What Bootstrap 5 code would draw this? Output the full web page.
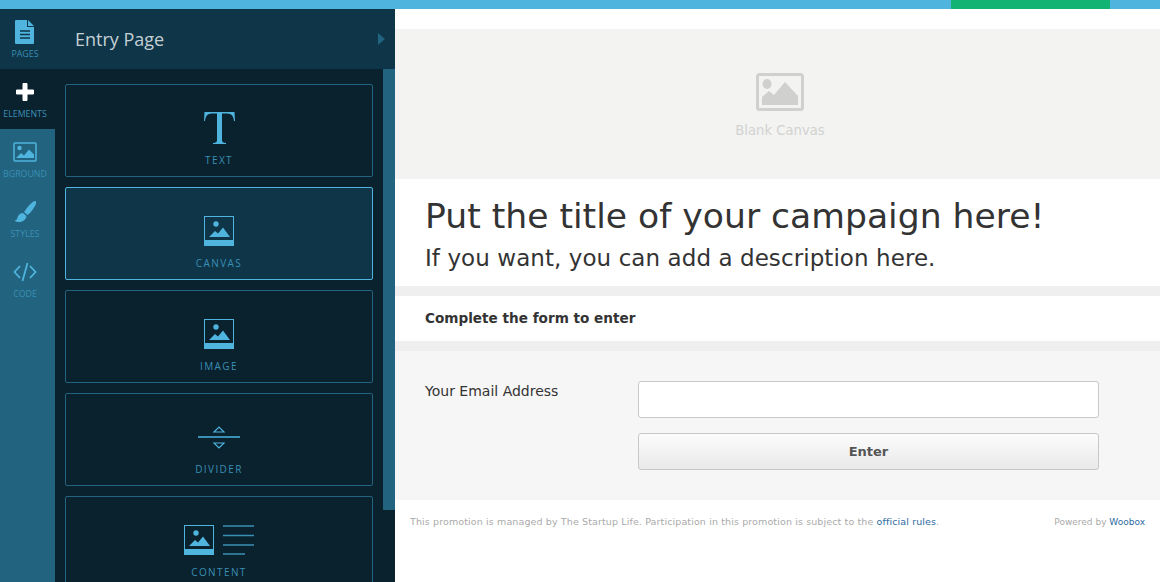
<!DOCTYPE html>
<html lang="en">
<head>
  <meta charset="utf-8">
  <title>Entry Page</title>
  <link href="https://cdn.jsdelivr.net/npm/bootstrap@5.3.3/dist/css/bootstrap.min.css" rel="stylesheet">
  <style>
    html, body { height: 100%; overflow: hidden; }
    body { font-family: "DejaVu Sans", sans-serif; color: #333; background: #fff; }
    .top-strip { height: 9px; background: #4fb4de; }
    .top-strip-green { width: 159px; margin-right: 50px; background: #13b374; }
    .main-area { height: 573px; }
    .side-panel { width: 395px; background: #0a212e; font-family: "Open Sans", sans-serif; }
    .side-head { height: 60px; background: #0e3548; }
    .side-tab { width: 55px; height: 60px; padding: 10px 5px 0 0; font-size: 8.8px; color: #3a8fb4; }
    .side-tab svg { display: block; height: 26px; margin-bottom: 3px; }
    .side-tab-active { background: #0a212e; }
    .side-rail { width: 55px; background: #22637f; }
    .side-title { font-size: 18px; color: #c5d0d5; padding-left: 20px; }
    .side-arrow { width: 0; height: 0; margin-right: 10px; border-left: 7px solid #22637f; border-top: 6px solid transparent; border-bottom: 6px solid transparent; }
    .side-body { height: 513px; overflow: hidden; }
    .tile-list { width: 328px; padding: 15px 10px 0; }
    .elem-tile { flex: 0 0 93px; margin-bottom: 10px; border: 1px solid #22637f; border-radius: 2px; font-size: 10px; letter-spacing: 1.4px; color: #3a8fb4; }
    .elem-tile-on { background: #0e3548; border-color: #4fb4de; }
    .tile-icon { height: 40px; margin-top: 23px; margin-bottom: 5px; }
    .tile-scroll { width: 12px; height: 441px; background: #22637f; }
    .page-view { min-width: 0; }
    .canvas-box { height: 150px; margin-top: 20px; padding: 44px 0 0 5px; background: #f3f3f2; font-size: 13.2px; color: #d2d2d0; }
    .canvas-text { margin-top: 10px; }
    .title-box { height: 107px; padding: 16px 30px 0; }
    .title-box h1 { font-size: 34.6px; font-weight: 400; line-height: 42px; margin: 0; color: #333; }
    .title-box p { font-size: 23px; line-height: 30px; margin: 6px 0 0; letter-spacing: .07px; color: #333; }
    .sub-head { height: 45px; padding-left: 30px; margin: 10px 0; font-size: 13.6px; font-weight: 700; box-shadow: 0 -10px 0 #efefef, 0 10px 0 #efefef; }
    .form-box { height: 149px; padding: 30px 61px 30px 30px; background: #f6f6f6; font-size: 14px; }
    .form-label-cell { width: 213px; }
    .form-box .form-control { height: 37px; border: 1px solid #c8c8c8; border-radius: 3px; box-shadow: none; }
    .enter-btn { display: block; width: 100%; height: 37px; margin-top: 15px; padding: 1px 0 0; font-size: 13px; font-weight: 700; color: #555; border: 1px solid #c8c8c8; border-radius: 3px; background: linear-gradient(#fcfcfc, #e9e9e9); }
    .foot-line { padding: 15px 15px 0; font-size: 9.5px; letter-spacing: .12px; color: #aaa; }
    .foot-power { font-size: 9px; letter-spacing: 0; }
    .foot-line a { color: #2d6a9f; text-decoration: none; }
  </style>
</head>
<body>
  <div class="top-strip d-flex justify-content-end">
    <div class="top-strip-green"></div>
  </div>

  <div class="main-area d-flex">
    <!-- left editor panel -->
    <div class="side-panel flex-shrink-0 d-flex flex-column">
      <div class="side-head d-flex align-items-center">
        <div class="side-tab text-center flex-shrink-0">
          <svg class="mx-auto" width="20" height="24" viewBox="0 0 20 24"><path fill="#4fb4de" d="M1 0h11v7h7v16a1 1 0 0 1-1 1H1a1 1 0 0 1-1-1V1a1 1 0 0 1 1-1z"/><path fill="#4fb4de" d="M13 0l6 6h-6z"/><path stroke="#0e3548" stroke-width="1.6" d="M5 11h10M5 14.500h10M5 18h10"/></svg>
          PAGES
        </div>
        <div class="side-title flex-grow-1">Entry Page</div>
        <div class="side-arrow"></div>
      </div>

      <div class="side-body d-flex">
        <div class="side-rail flex-shrink-0">
          <div class="side-tab side-tab-active text-center">
            <svg class="mx-auto" width="18" height="18" viewBox="0 0 18 18"><path fill="#fff" stroke="#fff" stroke-linejoin="round" d="M7 .5h4v6.500h6.500v4H11v6.500H7V11H.5V7H7z"/></svg>
            ELEMENTS
          </div>
          <div class="side-tab text-center">
            <svg class="mx-auto" width="24" height="20" viewBox="0 0 24 20"><rect x="1" y="1" width="22" height="18" rx="1" fill="none" stroke="#4fb4de" stroke-width="1.500"/><circle cx="6.500" cy="6" r="2.200" fill="#4fb4de"/><path fill="#4fb4de" d="M3 16l5-5 3 2.500 5-6 5 5v3.500z"/></svg>
            BGROUND
          </div>
          <div class="side-tab text-center">
            <svg class="mx-auto" width="24" height="24" viewBox="0 0 24 24"><path fill="#4fb4de" d="M22 1c1.500 0 1.500 2 .5 4-2 4-5 8-8 10l-3.500-3C14 8 19 1 22 1zM10 13l3.500 3c-.5 3.500-3.500 6-7 6-2 0-4-.5-5-1.500 2 0 2.500-1 3-3 .5-2.500 3-4.500 5.500-4.500z"/></svg>
            STYLES
          </div>
          <div class="side-tab text-center">
            <svg class="mx-auto" width="24" height="24" viewBox="0 0 24 24"><path fill="none" stroke="#4fb4de" stroke-width="1.800" d="M7 6l-5.500 6L7 18M17 6l5.500 6L17 18M14.500 3l-5 18"/></svg>
            CODE
          </div>
        </div>

        <div class="tile-list d-flex flex-column flex-shrink-0">
          <div class="elem-tile d-flex flex-column align-items-center">
            <div class="tile-icon d-flex align-items-center">
              <svg width="31" height="32" viewBox="0 0 31 32"><path fill="#4fb4de" d="M.5 0h30l.5 9h-1c-.5-4.500-2-7.500-7-7.500h-5V28c0 2 1 2.800 4 3v1H9v-1c3-.2 4-1 4-3V1.500H8c-5 0-6.500 3-7 7.500H0z"/></svg>
            </div>
            <span>TEXT</span>
          </div>
          <div class="elem-tile elem-tile-on d-flex flex-column align-items-center">
            <div class="tile-icon d-flex align-items-center">
              <svg width="30" height="30" viewBox="0 0 30 30"><rect x=".5" y=".5" width="29" height="29" fill="none" stroke="#4fb4de"/><rect y="24" width="30" height="6" fill="#4fb4de"/><circle cx="12" cy="8" r="2.700" fill="#4fb4de"/><path fill="#4fb4de" d="M5 21l6-6 3 2.500 5-6 7 9.500z"/></svg>
            </div>
            <span>CANVAS</span>
          </div>
          <div class="elem-tile d-flex flex-column align-items-center">
            <div class="tile-icon d-flex align-items-center">
              <svg width="30" height="30" viewBox="0 0 30 30"><rect x=".5" y=".5" width="29" height="29" fill="none" stroke="#4fb4de"/><rect y="24" width="30" height="6" fill="#4fb4de"/><circle cx="12" cy="8" r="2.700" fill="#4fb4de"/><path fill="#4fb4de" d="M5 21l6-6 3 2.500 5-6 7 9.500z"/></svg>
            </div>
            <span>IMAGE</span>
          </div>
          <div class="elem-tile d-flex flex-column align-items-center">
            <div class="tile-icon d-flex align-items-center">
              <svg width="42" height="24" viewBox="0 0 42 24"><path fill="none" stroke="#4fb4de" stroke-width="1.200" d="M16 7l5-5 5 5zM16 18l5 5 5-5z"/><path stroke="#3a8fb4" stroke-width="2" d="M0 12h42"/></svg>
            </div>
            <span>DIVIDER</span>
          </div>
          <div class="elem-tile d-flex flex-column align-items-center">
            <div class="tile-icon d-flex align-items-center">
              <svg width="71" height="30" viewBox="0 0 71 30"><rect x=".5" y=".5" width="29" height="29" fill="none" stroke="#4fb4de"/><rect y="24" width="30" height="6" fill="#4fb4de"/><circle cx="12" cy="8" r="2.700" fill="#4fb4de"/><path fill="#4fb4de" d="M5 21l6-6 3 2.500 5-6 7 9.500z"/><path stroke="#3a8fb4" stroke-width="1.500" d="M39 1h31M39 10.500h31M39 20h31M39 29h22"/></svg>
            </div>
            <span>CONTENT</span>
          </div>
        </div>

        <div class="tile-scroll flex-shrink-0"></div>
      </div>
    </div>

    <!-- campaign preview -->
    <div class="page-view flex-grow-1">
      <div class="canvas-box d-flex flex-column align-items-center">
        <svg width="48" height="38" viewBox="0 0 48 38"><rect x="1.500" y="1.500" width="45" height="35" rx="2" fill="none" stroke="#d0d0ce" stroke-width="3"/><ellipse cx="11" cy="11" rx="4.500" ry="5" fill="#d0d0ce"/><path fill="#d0d0ce" d="M6 32V24l7-6 5 4 11-13 13 14v9z"/></svg>
        <div class="canvas-text">Blank Canvas</div>
      </div>
      <div class="title-box">
        <h1>Put the title of your campaign here!</h1>
        <p>If you want, you can add a description here.</p>
      </div>
      <div class="sub-head d-flex align-items-center">Complete the form to enter</div>
      <div class="form-box d-flex">
        <div class="form-label-cell flex-shrink-0">Your Email Address</div>
        <div class="flex-grow-1">
          <input type="text" class="form-control">
          <button type="button" class="btn enter-btn">Enter</button>
        </div>
      </div>
      <div class="foot-line d-flex justify-content-between align-items-baseline">
        <div>This promotion is managed by The Startup Life. Participation in this promotion is subject to the <a href="#">official rules</a>.</div>
        <div class="foot-power">Powered by <a href="#">Woobox</a></div>
      </div>
    </div>
  </div>

  <script src="https://cdn.jsdelivr.net/npm/bootstrap@5.3.3/dist/js/bootstrap.bundle.min.js"></script>
</body>
</html>
